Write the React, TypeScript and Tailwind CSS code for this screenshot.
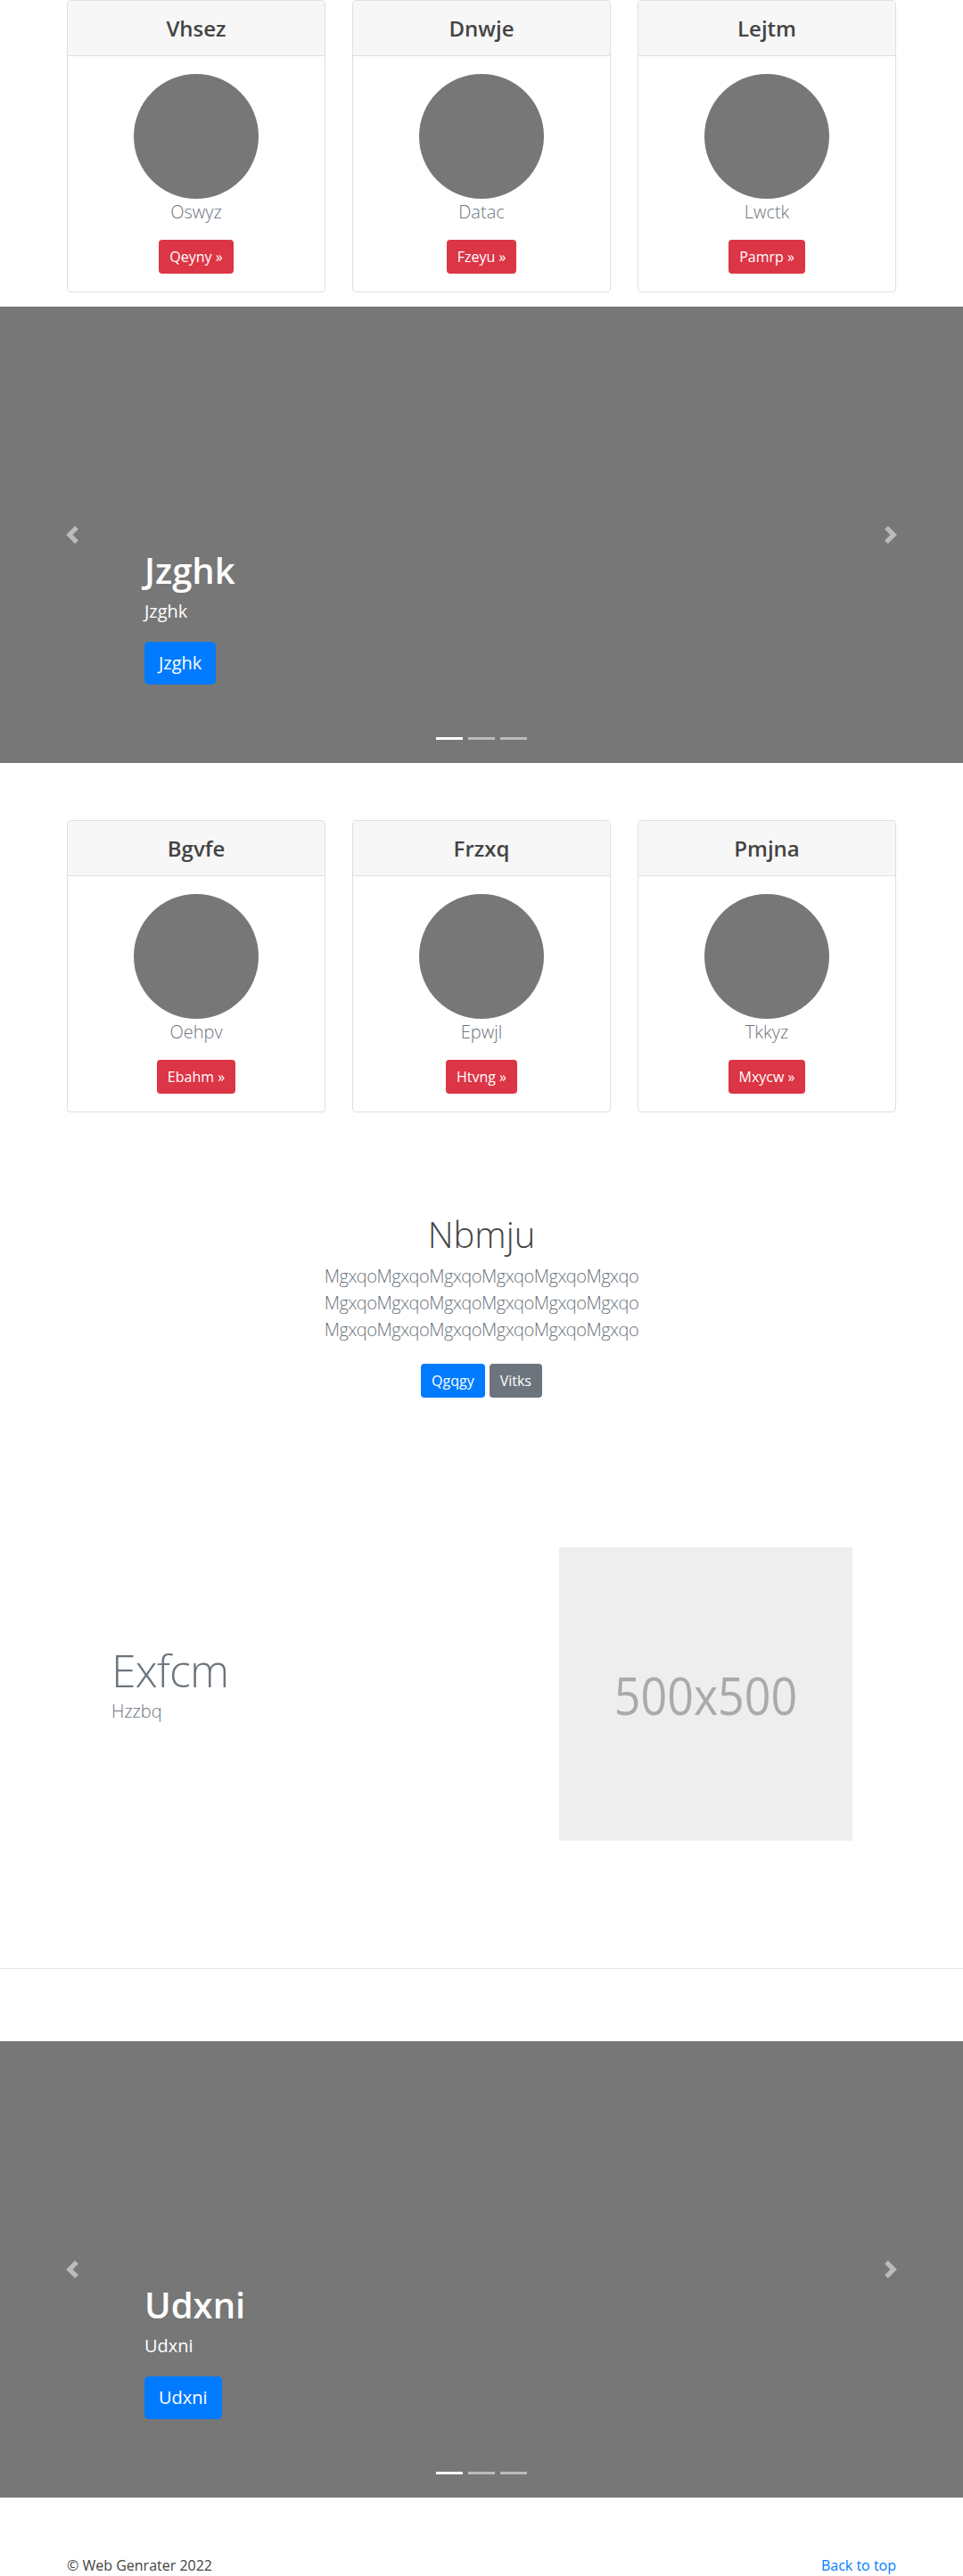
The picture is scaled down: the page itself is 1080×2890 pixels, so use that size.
import React from "react";

type CardData = { title: string; sub: string; btn: string };

const row1: CardData[] = [
  { title: "Vhsez", sub: "Oswyz", btn: "Qeyny" },
  { title: "Dnwje", sub: "Datac", btn: "Fzeyu" },
  { title: "Lejtm", sub: "Lwctk", btn: "Pamrp" },
];

const row2: CardData[] = [
  { title: "Bgvfe", sub: "Oehpv", btn: "Ebahm" },
  { title: "Frzxq", sub: "Epwjl", btn: "Htvng" },
  { title: "Pmjna", sub: "Tkkyz", btn: "Mxycw" },
];

function Card({ title, sub, btn }: CardData) {
  return (
    <div className="flex flex-col overflow-hidden rounded-[4px] border border-[#dfdfdf] bg-white">
      <div className="flex h-[62px] items-center justify-center border-b border-[#dfdfdf] bg-[#f7f7f7] text-[24px] font-semibold text-[#444]">
        {title}
      </div>
      <div className="flex flex-col items-center p-5">
        <div className="h-[140px] w-[140px] rounded-full bg-[#777]" />
        <p className="h-[30px] text-[20px] font-light leading-[30px] text-[#6c757d]">{sub}</p>
        <button className="mt-4 h-[38px] rounded-[4px] bg-[#dc3545] px-3 text-[16px] leading-[24px] text-white">
          {btn} »
        </button>
      </div>
    </div>
  );
}

function CardRow({ items }: { items: CardData[] }) {
  return (
    <div className="mx-auto grid w-[930px] grid-cols-3 gap-[30px]">
      {items.map((c) => (
        <Card key={c.title} {...c} />
      ))}
    </div>
  );
}

function PrevIcon() {
  return (
    <svg viewBox="0 0 8 8" className="h-5 w-5" fill="#fff">
      <path d="M5.25 0l-4 4 4 4 1.5-1.5-2.5-2.5 2.5-2.5-1.5-1.5z" />
    </svg>
  );
}

function NextIcon() {
  return (
    <svg viewBox="0 0 8 8" className="h-5 w-5" fill="#fff">
      <path d="M2.75 0l-1.5 1.5 2.5 2.5-2.5 2.5 1.5 1.5 4-4-4-4z" />
    </svg>
  );
}

function Carousel({ label }: { label: string }) {
  return (
    <div className="relative h-[512px] w-full bg-[#777]">
      <div className="absolute left-[71px] top-[246px] opacity-50">
        <PrevIcon />
      </div>
      <div className="absolute right-[71px] top-[246px] opacity-50">
        <NextIcon />
      </div>
      <div className="absolute left-[162px] top-[272px] flex flex-col items-start text-white">
        <h1 className="text-[40px] font-semibold leading-[48px]">{label}</h1>
        <p className="mt-[7px] text-[20px] leading-[30px]">{label}</p>
        <button className="mt-[19px] h-[48px] rounded-[5px] bg-[#007bff] px-4 text-[20px] leading-[30px] text-white">
          {label}
        </button>
      </div>
      <div className="absolute bottom-[26px] left-1/2 flex -translate-x-1/2 gap-[6px]">
        <div className="h-[3px] w-[30px] bg-white" />
        <div className="h-[3px] w-[30px] bg-white/50" />
        <div className="h-[3px] w-[30px] bg-white/50" />
      </div>
    </div>
  );
}

export default function App() {
  const line = "MgxqoMgxqoMgxqoMgxqoMgxqoMgxqo";
  return (
    <div className="w-full bg-white font-['Open_Sans',sans-serif] text-[#212529]">
      <CardRow items={row1} />

      <div className="mt-4">
        <Carousel label="Jzghk" />
      </div>

      <div className="mt-16">
        <CardRow items={row2} />
      </div>

      <section className="mt-[113px] flex flex-col items-center text-center">
        <h1 className="text-[40px] font-light leading-[48px] text-[#444]">Nbmju</h1>
        <p className="mt-2 text-[20px] font-light leading-[30px] tracking-[-0.5px] text-[#6c757d]">
          {line}
          <br />
          {line}
          <br />
          {line}
        </p>
        <div className="mt-[23px] flex gap-[5px]">
          <button className="h-[38px] rounded-[4px] bg-[#007bff] px-3 text-[16px] leading-[24px] text-white">
            Qgqgy
          </button>
          <button className="h-[38px] rounded-[4px] bg-[#6c757d] px-3 text-[16px] leading-[24px] text-white">
            Vitks
          </button>
        </div>
      </section>

      <section className="mx-auto mt-[168px] flex w-[930px] items-start">
        <div className="w-[552px] pl-[50px] pt-[113px]">
          <h2 className="text-[50px] font-light leading-[50px] tracking-[-0.8px] text-[#6c757d]">Exfcm</h2>
          <p className="mt-[6px] text-[20px] font-light leading-[30px] text-[#6c757d]">Hzzbq</p>
        </div>
        <div className="flex h-[329px] w-[329px] items-center justify-center bg-[#eee]">
          <span className="scale-y-[1.13] text-[52px] leading-none text-[#aaa]">500x500</span>
        </div>
      </section>

      <hr className="mt-[143px] border-0 border-t border-[#e5e5e5]" />

      <div className="mt-[81px]">
        <Carousel label="Udxni" />
      </div>

      <footer className="mx-auto mt-16 flex w-[930px] justify-between pb-4 text-[16px] leading-[24px]">
        <p className="text-[#444]">© Web Genrater 2022</p>
        <a href="#" className="text-[#007bff]">
          Back to top
        </a>
      </footer>
    </div>
  );
}
